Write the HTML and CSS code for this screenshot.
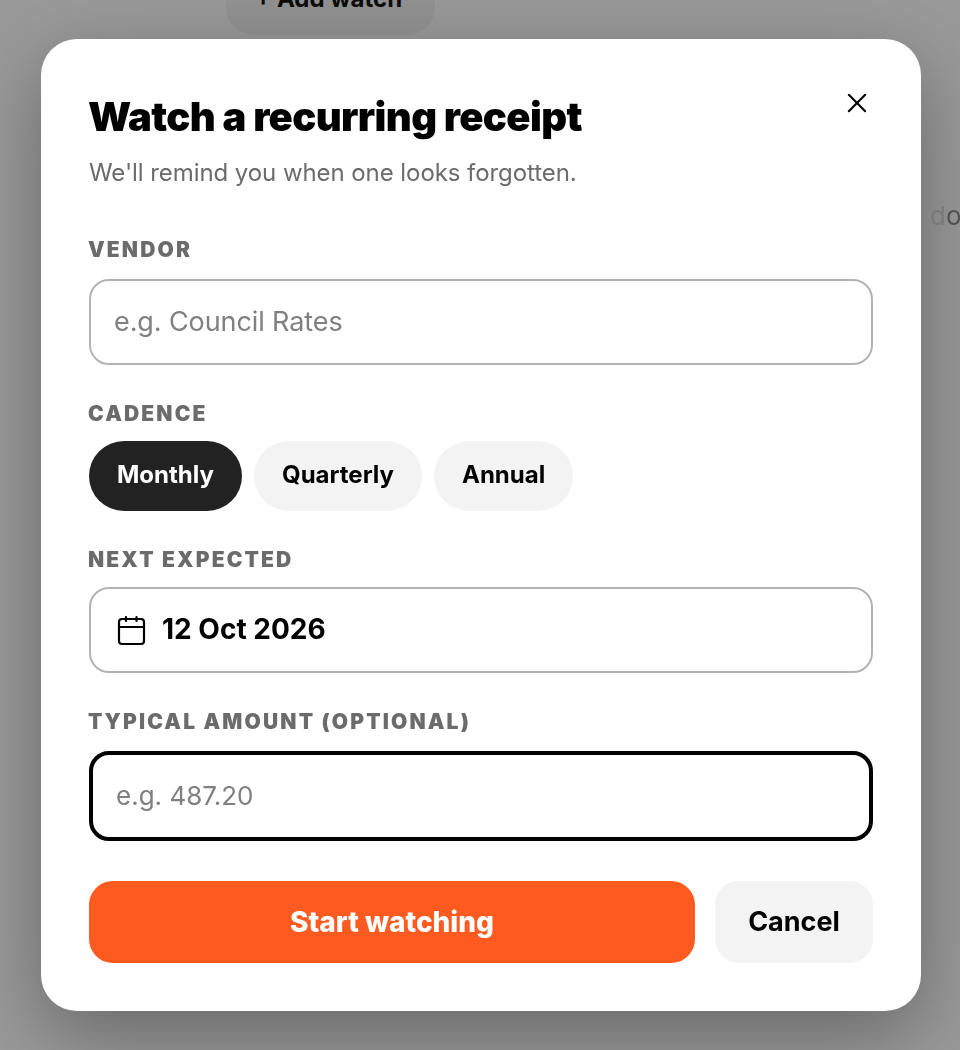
FILE: index.html
```html
<!DOCTYPE html>
<html lang="en">
<head>
  <meta charset="UTF-8" />
  <meta name="viewport" content="width=device-width, initial-scale=1" />
  <title>Watch a recurring receipt</title>
  <link rel="stylesheet" href="styles.css">
</head>
<body>
  <div class="page">
    <button type="button" class="add-watch">+ Add watch</button>
    <span class="behind-text">do</span>
  </div>

  <div class="overlay">
    <form class="modal" novalidate>
      <button type="button" class="close" aria-label="Close">
        <svg width="28" height="28" viewBox="0 0 24 24" fill="none" stroke="currentColor" stroke-width="1.8" stroke-linecap="round">
          <path d="M19 5 5 19" />
          <path d="M5 5l14 14" />
        </svg>
      </button>

      <h2>Watch a recurring receipt</h2>
      <p class="sub">We'll remind you when one looks forgotten.</p>

      <label class="field-label first" for="vendor">VENDOR</label>
      <input class="text-input" type="text" id="vendor" placeholder="e.g. Council Rates" />

      <div class="field-label cadence-label">CADENCE</div>
      <div class="chips">
        <button type="button" class="chip active">Monthly</button>
        <button type="button" class="chip">Quarterly</button>
        <button type="button" class="chip">Annual</button>
      </div>

      <div class="field-label next-label">NEXT EXPECTED</div>
      <div class="date-field">
        <svg width="30" height="32" viewBox="0 0 30 32" fill="none" stroke="currentColor" stroke-width="2.2" stroke-linecap="round" stroke-linejoin="round">
          <rect x="3" y="5" width="25" height="25" rx="3" />
          <path d="M10 3v4" />
          <path d="M20.500 3v4" />
          <path d="M3 13h25" />
        </svg>
        <span>12 Oct 2026</span>
      </div>

      <label class="field-label amount-label" for="amount">TYPICAL AMOUNT (OPTIONAL)</label>
      <input class="text-input focused" type="text" id="amount" placeholder="e.g. 487.20" />

      <div class="actions">
        <button type="submit" class="primary">Start watching</button>
        <button type="button" class="cancel">Cancel</button>
      </div>
    </form>
  </div>
</body>
</html>
```

FILE: styles.css
```css
* {
  box-sizing: border-box;
}
html, body {
  margin: 0;
  height: 100%;
}
body {
  font-family: 'Inter', 'Liberation Sans', sans-serif;
  background: #fff;
  color: #000;
  overflow: hidden;
}
button, input {
  font-family: inherit;
}
.page {
  position: relative;
  height: 1050px;
}
.add-watch {
  position: absolute;
  left: 226px;
  top: -35px;
  width: 209px;
  height: 70px;
  padding: 0 4px 3px 0;
  border: none;
  border-radius: 28px;
  background: #f2f2f2;
  color: #111;
  font-size: 24px;
  font-weight: 700;
}
.behind-text {
  position: absolute;
  left: 930px;
  top: 201px;
  width: 30px;
  overflow: hidden;
  font-size: 26px;
  line-height: 30px;
  white-space: nowrap;
  background: linear-gradient(to right, #e4e4e4, #dcdcdc 45%, #8f8f8f 62%);
  -webkit-background-clip: text;
  background-clip: text;
  color: transparent;
}
.overlay {
  position: fixed;
  inset: 0;
  background: rgba(0,0,0,0.4);
  padding: 39px 39px 0 41px;
}
.modal {
  position: relative;
  width: 880px;
  height: 972px;
  padding: 48px;
  background: white;
  border-radius: 36px;
  box-shadow: 0 24px 80px rgba(0,0,0,0.33);
}
.close {
  position: absolute;
  top: 50px;
  right: 50px;
  padding: 0;
  width: 28px;
  height: 28px;
  border: none;
  background: none;
  color: #000;
}
h2 {
  margin: 0 0 0 -1px;
  font-size: 40px;
  line-height: 60px;
  font-weight: 900;
  letter-spacing: -0.62px;
}
.sub {
  margin: 8px 0 0;
  font-size: 24px;
  line-height: 36px;
  letter-spacing: -0.07px;
  color: #6b6b6b;
}
.field-label {
  display: block;
  margin-left: -1px;
  font-size: 21px;
  line-height: 30px;
  font-weight: 900;
  letter-spacing: 2.15px;
  color: #6b6b6b;
}
.first {
  margin-top: 44px;
}
.text-input {
  display: block;
  width: 100%;
  height: 86px;
  margin-top: 14px;
  padding: 0 23px 2px;
  border: 2px solid #b3b3b3;
  border-radius: 20px;
  background: white;
  font-size: 27px;
  letter-spacing: -0.1px;
  outline: none;
}
.text-input::placeholder {
  color: #808080;
  opacity: 1;
}
.focused {
  height: 90px;
  margin-top: 14px;
  padding: 0 23px 2px;
  border: 4px solid #000;
  font-size: 26px;
  letter-spacing: 0;
}
.cadence-label {
  margin-top: 34px;
}
.chips {
  display: flex;
  gap: 12px;
  margin-top: 12px;
}
.chip {
  height: 70px;
  padding: 0 28px 3px;
  border: none;
  border-radius: 35px;
  background: #f3f3f3;
  color: #000;
  font-size: 24px;
  font-weight: 700;
}
.chip.active {
  background: #222;
  color: white;
}
.next-label {
  margin-top: 34px;
}
.date-field {
  display: flex;
  align-items: center;
  gap: 16px;
  height: 86px;
  margin-top: 12px;
  padding: 0 25px;
  border: 2px solid #b3b3b3;
  border-radius: 20px;
  font-size: 28px;
  font-weight: 700;
}
.date-field span {
  margin-bottom: 2px;
}
.amount-label {
  margin-top: 34px;
}
.actions {
  display: flex;
  gap: 20px;
  margin-top: 40px;
}
.primary {
  flex: 1;
  height: 82px;
  border: none;
  border-radius: 24px;
  background: #ff5a1f;
  color: white;
  font-size: 28px;
  font-weight: 800;
}
.cancel {
  width: 158px;
  height: 82px;
  padding-bottom: 2px;
  border: none;
  border-radius: 24px;
  background: #f3f3f3;
  color: #000;
  font-size: 27px;
  font-weight: 700;
}
```
